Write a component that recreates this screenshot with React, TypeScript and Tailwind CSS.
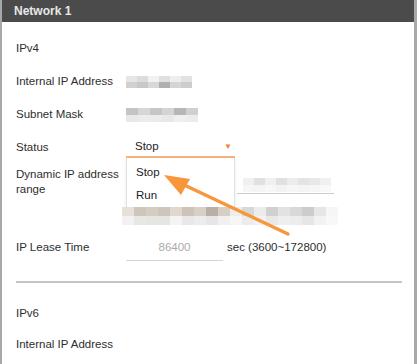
import React from "react";

// pixelated (blurred) values, two rows of cells
const blurInternal = [
    ["#e6e6e6", "#dcdcdc", "#f2f2f2", "#e0e0e0", "#eeeeee", "#e2e2e2"],
    ["#d0d0d0", "#c8c8c8", "#d8d8d8", "#b0b0b0", "#d5d5d5", "#cccccc"],
];
const blurSubnet = [
    ["#c4c4c4", "#d6d6d6", "#c6c6c6", "#d4d4d4", "#b4b8b4", "#d0d0d0"],
    ["#e8e8e8", "#ececec", "#ebebeb", "#e8e8e8", "#eef0ee", "#ececec"],
];
const blurRangeEnd = [
    ["#f0f0f0", "#e0e0e0", "#f0f0f0", "#e0e0e0", "#ececec", "#e4e4e4", "#e8e8e8", "#f0f0f0"],
    ["#f6f6f6", "#f4f4f4", "#f7f7f7", "#f3f3f3", "#f6f6f6", "#f4f4f4", "#f6f6f6", "#f8f8f8"],
];
const blurRangeRow = [
    ["#e6e0da", "#cfc6bb", "#d5ccc2", "#cec6bc", "#e0d8cf", "#cdc3b8", "#d8d0c7", "#b9afa5", "#d7cfc6", "#eeeeee", "#d8d8d8", "#ececec", "#d0d0d0", "#e2e2e2", "#d8d8d8", "#cccccc", "#e6e6e6", "#f6f6f6"],
    ["#f2f2f2", "#e6e8e6", "#e4e6e4", "#e4e6e4", "#f4f4f4", "#e8e8e8", "#ececec", "#e6e6e6", "#f0f0f0", "#f6f6f6", "#ececec", "#f2f2f2", "#e8e8e8", "#eeeeee", "#ececec", "#e6e6e6", "#f2f2f2", "#f8f8f8"],
];

const Pixelated = ({ rows, cell, rowH }: { rows: string[][]; cell: string; rowH: string }) => (
    <div className="flex flex-col">
        {rows.map((row, i) => (
            <div key={i} className="flex">
                {row.map((c, j) => (
                    <div key={j} className={`${cell} ${rowH}`} style={{ backgroundColor: c }} />
                ))}
            </div>
        ))}
    </div>
);

const Row = ({ label, h = "h-[33px]", children }: { label: string; h?: string; children?: React.ReactNode }) => (
    <div className={`flex ${h} items-center`}>
        <div className="w-[110px] shrink-0">{label}</div>
        {children}
    </div>
);

export default function App() {
    return (
        <div className="relative h-[364px] w-[417px] overflow-hidden border-l-2 border-r-[3px] border-[#a8a8a8] bg-white font-['Liberation_Sans',sans-serif] text-[11.5px] text-[#2e2e2e]">
            <div className="flex h-[22px] items-center bg-[#4b4b4b] pl-[12px] text-[12px] font-bold text-[#e8e8e8]">
                Network 1
            </div>

            <div className="pl-[14px] pr-[12px] pt-[10px]">
                <Row label="IPv4" />
                <Row label="Internal IP Address">
                    <Pixelated rows={blurInternal} cell="w-[11px]" rowH="h-[6px]" />
                </Row>
                <Row label="Subnet Mask">
                    <Pixelated rows={blurSubnet} cell="w-[12px]" rowH="h-[7px]" />
                </Row>
                <Row label="Status">
                    <div className="flex h-[20px] w-[109px] items-center justify-between border-b-2 border-[#f2b47a] pl-[9px] pr-[3px] text-[#222]">
                        <span>Stop</span>
                        <span className="text-[8px] text-[#e8843a]">▼</span>
                    </div>
                </Row>

                <div className="flex h-[67px] pt-[3px]">
                    <div className="w-[110px] shrink-0 leading-[15px]">Dynamic IP address range</div>
                    <div className="ml-[111px] flex h-[27px] w-[97px] items-center border-b border-[#cccccc] pl-[6px] pt-[10px]">
                        <Pixelated rows={blurRangeEnd} cell="w-[11px]" rowH="h-[7px]" />
                    </div>
                </div>

                <Row label="IP Lease Time">
                    <div className="flex h-[26px] w-[97px] items-center justify-center border-b border-[#d6d6d6] pt-[2px] text-[#aaa]">
                        86400
                    </div>
                    <span className="ml-[4px]">sec (3600~172800)</span>
                </Row>

                <div className="mt-[17px] h-[2px] bg-[#c4c4c4]" />

                <div className="pt-[15px]">
                    <Row label="IPv6" h="h-[31px]" />
                    <Row label="Internal IP Address" h="h-[31px]" />
                </div>
            </div>

            {/* open dropdown list */}
            <div className="absolute left-[124px] top-[158px] h-[52px] w-[109px] border border-t-0 border-[#e2e2e2] bg-white shadow-[0_2px_4px_rgba(0,0,0,0.08)]">
                <div className="flex h-[26px] items-center pl-[9px] pt-[3px] text-[#222]">Stop</div>
                <div className="flex h-[24px] items-center pl-[9px] text-[#222]">Run</div>
            </div>

            {/* blurred range row is painted over the list */}
            <div className="absolute left-[120px] top-[207px]">
                <Pixelated rows={blurRangeRow} cell="w-[12px]" rowH="h-[9px]" />
            </div>

            {/* callout arrow */}
            <svg className="pointer-events-none absolute left-0 top-0" width="417" height="364" viewBox="0 0 417 364">
                <line x1="286" y1="234" x2="178" y2="183" stroke="#f7963a" strokeWidth="3.4" strokeLinecap="round" />
                <polygon points="162,175 188,179 179,195" fill="#f7963a" />
            </svg>
        </div>
    );
}
